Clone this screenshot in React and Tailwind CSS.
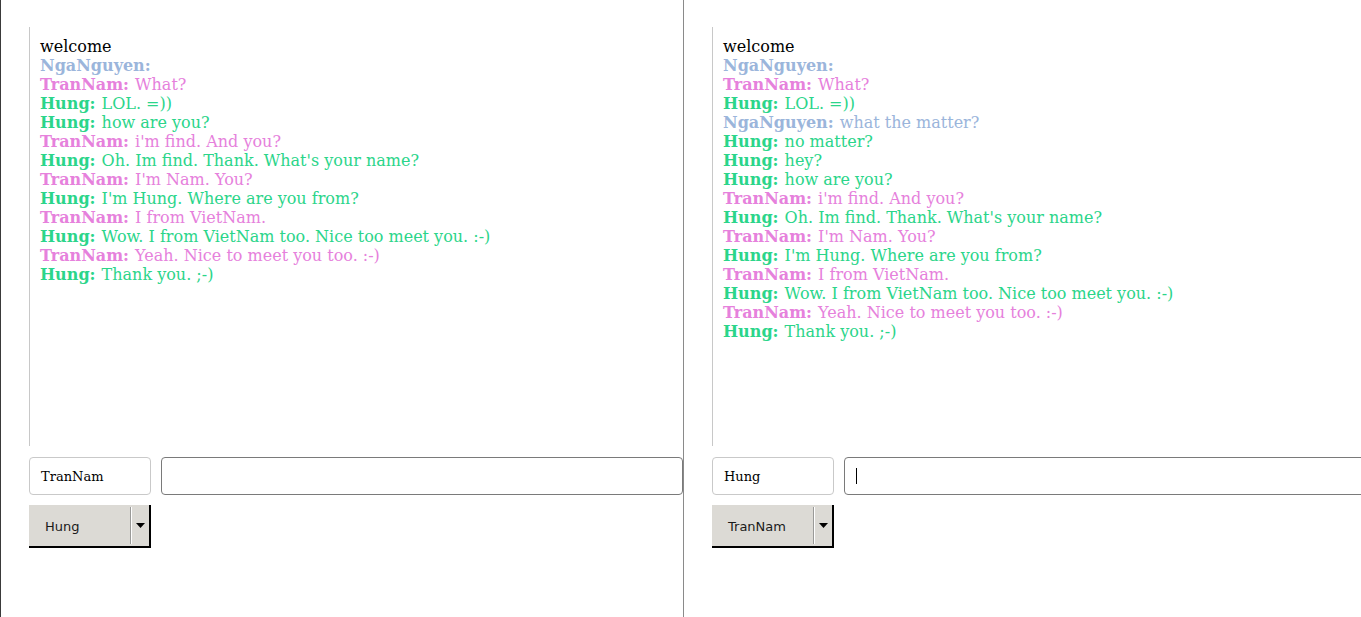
import React from 'react';

const COLORS = {
  NgaNguyen: 'text-[#9bb5db]',
  TranNam: 'text-[#e681dc]',
  Hung: 'text-[#2bd58a]',
};

const tail = [
  ['TranNam', "i'm find. And you?"],
  ['Hung', "Oh. Im find. Thank. What's your name?"],
  ['TranNam', "I'm Nam. You?"],
  ['Hung', "I'm Hung. Where are you from?"],
  ['TranNam', 'I from VietNam.'],
  ['Hung', 'Wow. I from VietNam too. Nice too meet you. :-)'],
  ['TranNam', 'Yeah. Nice to meet you too. :-)'],
  ['Hung', 'Thank you. ;-)'],
];

const leftMessages = [
  ['NgaNguyen', ''],
  ['TranNam', 'What?'],
  ['Hung', 'LOL. =))'],
  ['Hung', 'how are you?'],
  ...tail,
];

const rightMessages = [
  ['NgaNguyen', ''],
  ['TranNam', 'What?'],
  ['Hung', 'LOL. =))'],
  ['NgaNguyen', 'what the matter?'],
  ['Hung', 'no matter?'],
  ['Hung', 'hey?'],
  ['Hung', 'how are you?'],
  ...tail,
];

const ChatPane = ({ name, target, messages, focused, divider }) => (
  <div
    className={`w-[683px] shrink-0 h-full pl-[28px] pt-[27px] ${divider ? 'border-r border-[#8a8a8a]' : ''}`}
  >
    {/* Message log */}
    <div className="h-[419px] border-l border-[#c8c8c8] pl-[10px] pt-[10px] font-['DejaVu_Serif',serif] text-[16px] leading-[19px] whitespace-nowrap">
      <div className="text-black">welcome</div>
      {messages.map(([who, text], i) => (
        <div key={i} className={COLORS[who]}>
          <span className="font-bold mr-[1px]">{who}:</span> {text}
        </div>
      ))}
    </div>

    {/* Inputs */}
    <div className="flex gap-[10px] mt-[11px] h-[38px]">
      <div className="w-[122px] shrink-0 border border-[#c9c9c9] rounded-[4px] bg-white flex items-center pl-[11px] pt-[2px] font-['DejaVu_Serif',serif] text-[13px] text-black">
        {name}
      </div>
      <div className="relative flex-1 border border-[#7a7a7a] rounded-[4px] bg-white">
        {focused && <span className="absolute left-[11px] top-[10px] w-px h-[16px] bg-black" />}
      </div>
    </div>

    {/* Recipient select */}
    <div className="mt-[10px] w-[122px] h-[43px] flex bg-[#dcdad5] border-b-2 border-r-2 border-black font-['DejaVu_Sans',sans-serif] text-[13px] text-[#1a1a1a]">
      <div className="flex-1 flex items-center pl-[16px] pt-[3px]">{target}</div>
      <div className="my-[2px] w-[2px] flex">
        <div className="w-px bg-[#9a9a98]" />
        <div className="w-px bg-white" />
      </div>
      <div className="w-[17px] flex items-center justify-center">
        <svg width="9" height="5" viewBox="0 0 9 5">
          <path d="M0 0 H9 L4.5 5 Z" fill="#000" />
        </svg>
      </div>
    </div>
  </div>
);

export default function App() {
  return (
    <div className="w-[1361px] h-[617px] overflow-hidden bg-white flex border-l border-[#3a3a3a]">
      <ChatPane name="TranNam" target="Hung" messages={leftMessages} divider />
      <ChatPane name="Hung" target="TranNam" messages={rightMessages} focused />
    </div>
  );
}
